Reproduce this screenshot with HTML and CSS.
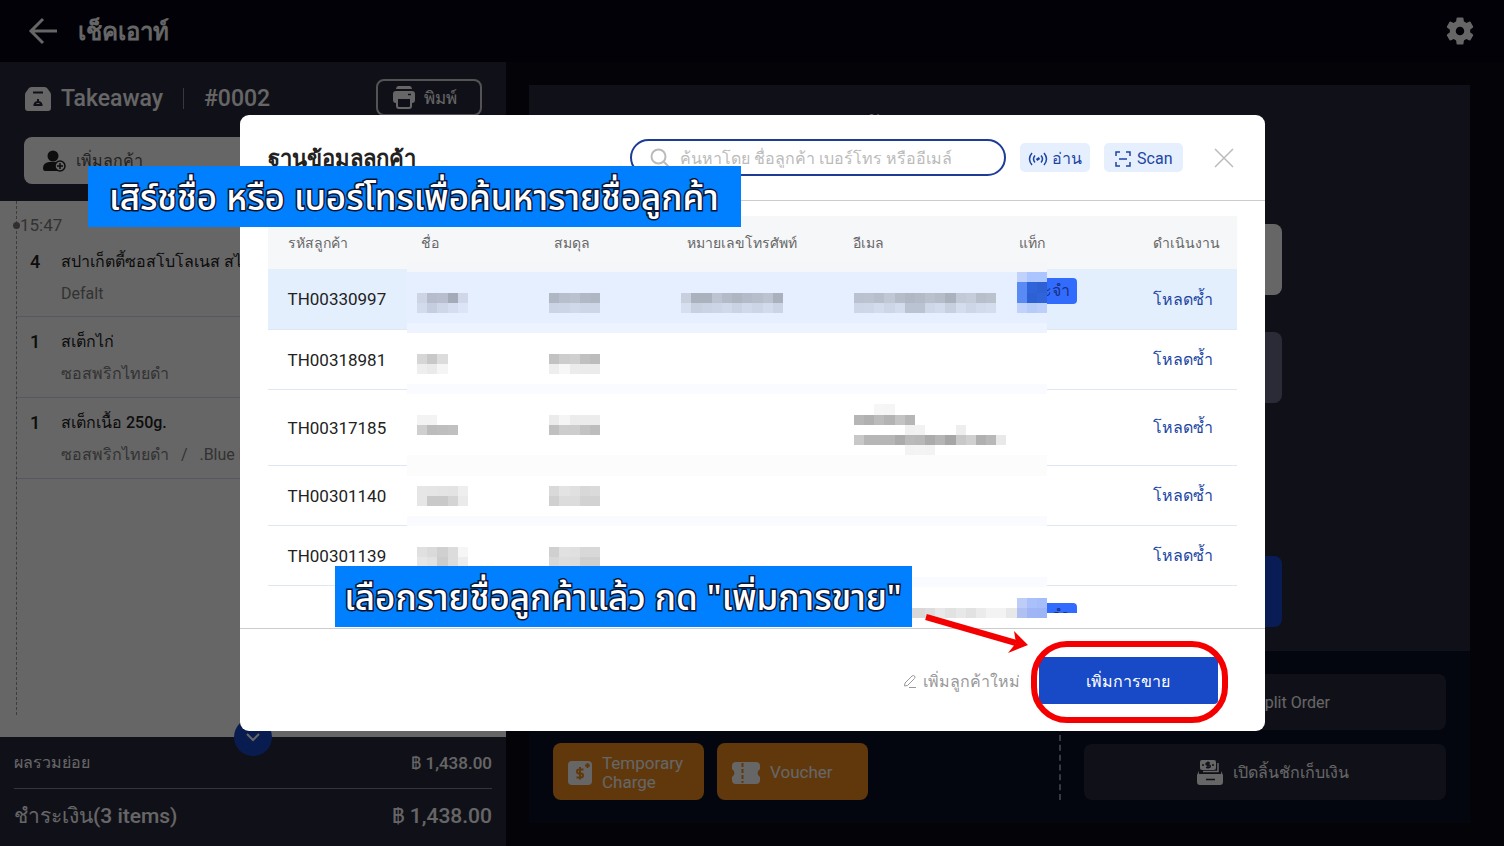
FILE: index.html
```html
<!DOCTYPE html>
<html lang="th">
<head>
    <meta charset="UTF-8">
    <meta name="viewport" content="width=device-width, initial-scale=1.0">
    <title>เช็คเอาท์</title>
    <link rel="stylesheet" href="styles.css">
</head>
<body>
    <div class="app">
        <header class="topbar">
            <button class="icon-btn" aria-label="Back">
                <svg width="30" height="28" viewBox="0 0 30 28" fill="none" stroke="currentColor" stroke-width="3"><path d="M16 2 4 14l12 12M4 14h26"/></svg>
            </button>
            <h1>เช็คเอาท์</h1>
            <button class="icon-btn settings" aria-label="Settings">
                <svg width="34" height="34" viewBox="0 0 24 24" fill="currentColor"><path d="M19.14 12.94c.04-.3.06-.61.06-.94s-.02-.64-.07-.94l2.03-1.58a.49.49 0 0 0 .12-.61l-1.92-3.32a.49.49 0 0 0-.59-.22l-2.39.96a7 7 0 0 0-1.62-.94l-.36-2.54a.48.48 0 0 0-.48-.41h-3.84a.48.48 0 0 0-.47.41l-.36 2.54c-.59.24-1.13.57-1.62.94l-2.39-.96a.48.48 0 0 0-.59.22L2.74 8.87a.48.48 0 0 0 .12.61l2.03 1.58a6 6 0 0 0 0 1.88l-2.03 1.58a.49.49 0 0 0-.12.61l1.92 3.32c.12.22.37.29.59.22l2.39-.96c.5.38 1.03.7 1.62.94l.36 2.54c.05.24.24.41.48.41h3.84c.24 0 .44-.17.47-.41l.36-2.54a7 7 0 0 0 1.62-.94l2.39.96c.22.08.47 0 .59-.22l1.92-3.32a.48.48 0 0 0-.12-.61zM12 15a3 3 0 1 1 0-6 3 3 0 0 1 0 6z"/></svg>
            </button>
        </header>

        <div class="workspace">
            <section class="order">
                <div class="order-head">
                    <div class="order-title">
                        <svg width="28" height="26" viewBox="0 0 28 26"><path fill="#fff" d="M8 1h12q2 0 3 1l3 4q1 1 1 3v13q0 3-3 3H4q-3 0-3-3V9q0-2 1-3l3-4q1-1 3-1z"/><path stroke="#28283c" stroke-width="2" fill="none" d="M9 6.500h10M9.500 19h9M10.500 18.500a3.700 3.700 0 0 1 7 0M14 13v2"/></svg>
                        <span>Takeaway</span>
                        <i class="bar"></i>
                        <span>#0002</span>
                    </div>
                    <button class="print-btn">
                        <svg width="22" height="23" viewBox="0 0 22 23"><path fill="#fff" d="M5.500 0h11Q18.500 0 19 3H3q.5-3 2.500-3zM3 5h16q3 0 3 3v6q0 3-3 3v-5H3v5q-3 0-3-3V8q0-3 3-3z"/><path fill="none" stroke="#fff" stroke-width="2" d="M4 12h14v8q0 2-2 2H6q-2 0-2-2z"/><path stroke="#28283c" stroke-width="1.500" d="M15 8.500h3"/></svg>
                        พิมพ์
                    </button>
                </div>
                <button class="customer-btn">
                    <svg width="24" height="22" viewBox="0 0 24 22"><circle cx="11" cy="6" r="5.500" fill="#222"/><path fill="#222" d="M7 12h8q6 1 6 9H3q-2 0-2-3 0-5 6-6z"/><circle cx="18" cy="16" r="5" fill="#fff" stroke="#222" stroke-width="1.500"/><path stroke="#222" stroke-width="1.500" d="M15 16h6M18 13v6"/></svg>
                    เพิ่มลูกค้า
                </button>
                <div class="sheet">
                    <div class="timeline">
                        <time>15:47</time>
                        <ul class="items">
                            <li><b>4</b><div><p>สปาเก็ตตี้ซอสโบโลเนส สไตล์</p><small>Defalt</small></div></li>
                            <li><b>1</b><div><p>สเต็กไก่</p><small>ซอสพริกไทยดำ</small></div></li>
                            <li><b>1</b><div><p>สเต็กเนื้อ <strong>250g.</strong></p><small>ซอสพริกไทยดำ &nbsp; / &nbsp; .Blue R</small></div></li>
                        </ul>
                    </div>
                </div>
                <div class="totals">
                    <button class="expand-btn" aria-label="Expand">
                        <svg width="14" height="10" viewBox="0 0 14 10" fill="none" stroke="#fff" stroke-width="2"><path d="m1 2 6 6 6-6"/></svg>
                    </button>
                    <div class="subtotal"><span>ผลรวมย่อย</span><b>฿ 1,438.00</b></div>
                    <div class="total"><span>ชำระเงิน(3 items)</span><span>฿ 1,438.00</span></div>
                </div>
            </section>

            <section class="payment">
                <div class="pay-form">
                    <h2>ต้องชำระเงินจำนวนรวม</h2>
                    <div class="field amount"></div>
                    <div class="field method"></div>
                    <div class="field confirm"></div>
                </div>
                <div class="actions">
                    <div class="promo">
                        <button class="orange">
                            <svg width="24" height="24" viewBox="0 0 24 24"><rect width="24" height="24" rx="4" fill="#fff"/><path fill="none" stroke="#f08c20" stroke-width="2" d="M15.500 8.500H11a2 2 0 0 0 0 4h2a2 2 0 0 1 0 4H8.500M12 6v12.500M19.500 2v5M17 4.500h5"/></svg>
                            Temporary Charge
                        </button>
                        <button class="orange">
                            <svg width="28" height="22" viewBox="0 0 28 22"><path fill="#fff" d="M4 0h20q4 0 4 4v3q-5 4 0 8v3q0 4-4 4H4q-4 0-4-4v-3q5-4 0-8V4q0-4 4-4z"/><path stroke="#f08c20" stroke-width="2" stroke-dasharray="4 2" d="M10.500 1v20"/></svg>
                            Voucher
                        </button>
                    </div>
                    <div class="tools">
                        <button>
                            <svg width="32" height="24" viewBox="0 0 32 24"><path fill="#fff" d="M4 1h24v22H4z"/></svg>
                            Split Order
                        </button>
                        <button>
                            <svg width="28" height="26" viewBox="0 0 28 26"><rect x="4" y="1" width="16" height="10" rx="2" fill="#fff"/><path fill="none" stroke="#fff" stroke-width="1.500" d="M22 4v8.500H7"/><path fill="#fff" d="M3 12v3h22v-3l2 4v7q0 3-3 3H4q-3 0-3-3v-7z"/><path fill="none" stroke="#28283c" stroke-width="1.500" d="M14 4h-3a1 1 0 0 0 0 2h2a1 1 0 0 1 0 2.500h-3M12 2.500v7M6 6h2M16 6h2M10 20.500h9"/></svg>
                            เปิดลิ้นชักเก็บเงิน
                        </button>
                    </div>
                </div>
            </section>
        </div>
    </div>

    <div class="backdrop">
        <div class="dialog" role="dialog" aria-labelledby="dialog-title">
            <div class="dialog-head">
                <h2 id="dialog-title">ฐานข้อมูลลูกค้า</h2>
                <div class="search">
                    <svg width="20" height="20" viewBox="0 0 20 20" fill="none" stroke="#bbb" stroke-width="2"><circle cx="8.500" cy="8.500" r="7"/><path d="m13.500 13.500 5 5"/></svg>
                    <input type="search" aria-label="ค้นหาลูกค้า" placeholder="ค้นหาโดย ชื่อลูกค้า เบอร์โทร หรืออีเมล์">
                </div>
                <button class="soft-btn read-btn">
                    <svg width="20" height="14" viewBox="0 0 20 14" fill="none" stroke="currentColor" stroke-width="1.500"><path d="M4 1q-5 6 0 12M16 1q5 6 0 12M7 3.500q-3 3.500 0 7M13 3.500q3 3.500 0 7"/><path stroke-width="2.500" d="m8.500 8 3-2"/></svg>
                    อ่าน
                </button>
                <button class="soft-btn">
                    <svg width="18" height="18" viewBox="0 0 18 18" fill="none" stroke="currentColor" stroke-width="1.500"><path d="M6 2H2v4M12 2h4v4M6 16H2v-4M12 16h4v-4M5 9h8"/></svg>
                    Scan
                </button>
                <button class="close-btn" aria-label="Close">
                    <svg width="20" height="20" viewBox="0 0 20 20" stroke="#bbb" stroke-width="1.500"><path d="m1 1 18 18M19 1 1 19"/></svg>
                </button>
            </div>

            <div class="dialog-body">
                <div class="table-wrap">
                    <table>
                        <thead>
                            <tr><th>รหัสลูกค้า</th><th>ชื่อ</th><th>สมดุล</th><th class="wide">หมายเลขโทรศัพท์</th><th class="wide">อีเมล</th><th>แท็ก</th><th class="last">ดำเนินงาน</th></tr>
                        </thead>
                        <tbody>
                            <tr class="selected"><td>TH00330997</td><td></td><td></td><td></td><td></td><td><span class="tag">ประจำ</span></td><td><a href="#">โหลดซ้ำ</a></td></tr>
                            <tr><td>TH00318981</td><td></td><td></td><td></td><td></td><td></td><td><a href="#">โหลดซ้ำ</a></td></tr>
                            <tr class="tall"><td>TH00317185</td><td></td><td></td><td></td><td></td><td></td><td><a href="#">โหลดซ้ำ</a></td></tr>
                            <tr><td>TH00301140</td><td></td><td></td><td></td><td></td><td></td><td><a href="#">โหลดซ้ำ</a></td></tr>
                            <tr><td>TH00301139</td><td></td><td></td><td></td><td></td><td></td><td><a href="#">โหลดซ้ำ</a></td></tr>
                            <tr class="tall"><td></td><td></td><td></td><td></td><td></td><td><span class="tag">ประจำ</span></td><td></td></tr>
                        </tbody>
                    </table>
                </div>
                <svg class="mosaic" id="mosaic" viewBox="0 0 63 35" preserveAspectRatio="none" shape-rendering="crispEdges"></svg>
            </div>

            <div class="dialog-foot">
                <button class="new-btn">
                    <svg width="14" height="14" viewBox="0 0 14 14" fill="none" stroke="currentColor"><path d="m2 9 7-7q1.500-1 2.500 0t0 2.500l-7 7-3 .5zM6 13.500h7"/></svg>
                    เพิ่มลูกค้าใหม่
                </button>
                <button class="primary-btn">เพิ่มการขาย</button>
            </div>

            <div class="callout callout-search">เสิร์ชชื่อ หรือ เบอร์โทรเพื่อค้นหารายชื่อลูกค้า</div>
            <div class="callout callout-pick">เลือกรายชื่อลูกค้าแล้ว กด "เพิ่มการขาย"</div>
            <svg class="arrow" width="106" height="44" viewBox="0 0 106 44"><path stroke="#f40000" stroke-width="6" d="M2 5 92 31"/><path fill="#f40000" d="m90 19 14 14-20 8 8-10z"/></svg>
            <div class="ring"></div>
        </div>
    </div>
    <script src="mosaic.js"></script>
</body>
</html>
```

FILE: styles.css
```css
* {
    box-sizing: border-box;
}
body {
    margin: 0;
    background: #0c0c16;
    color: white;
    font-family: Roboto, sans-serif;
    font-size: 16px;
}
h1, h2, p, ul {
    margin: 0;
    padding: 0;
}
button {
    display: flex;
    align-items: center;
    justify-content: center;
    border: none;
    padding: 0;
    background: none;
    color: inherit;
    font: inherit;
    cursor: pointer;
}
svg {
    flex: none;
}
.app {
    display: flex;
    flex-direction: column;
    height: 100vh;
}
.topbar {
    display: flex;
    align-items: center;
    height: 62px;
    padding: 0 27px;
    background: #030312;
}
.topbar h1 {
    margin-left: 21px;
    padding-top: 2px;
    font-size: 24px;
    line-height: 32px;
}
.icon-btn.settings {
    margin-left: auto;
}
.workspace {
    flex: 1;
    display: flex;
    min-height: 0;
}

/* order panel */
.order {
    display: flex;
    flex-direction: column;
    flex: 0 0 506px;
    background: #28283c;
}
.order-head {
    display: flex;
    align-items: center;
    justify-content: space-between;
    height: 75px;
    padding: 0 24px 4px;
}
.order-title {
    display: flex;
    align-items: center;
    padding-top: 2px;
    font-size: 23px;
    font-weight: 500;
}
.order-title svg {
    margin-right: 9px;
}
.bar {
    width: 1px;
    height: 21px;
    margin: 0 20px;
    background: #8c8ca0;
}
.print-btn {
    gap: 9px;
    width: 106px;
    height: 37px;
    padding-right: 8px;
    border: 2px solid #d0d0d8;
    border-radius: 8px;
    font-size: 17px;
}
.customer-btn {
    justify-content: flex-start;
    gap: 10px;
    height: 47px;
    margin: 0 24px 17px;
    padding: 0 18px;
    border-radius: 8px;
    background: white;
    color: #555;
}
.sheet {
    flex: 1;
    min-height: 0;
    padding-bottom: 22px;
    background: white;
    color: #222;
}
.timeline {
    height: 100%;
    margin-left: 16px;
    border-left: 1px dashed #999;
}
.timeline time {
    display: flex;
    align-items: center;
    height: 36px;
    padding-top: 12px;
    color: #808080;
    font-size: 17px;
}
.timeline time::before {
    content: "";
    width: 7px;
    height: 7px;
    margin: 0 0 0 -4px;
    border-radius: 50%;
    background: #777;
}
.items {
    list-style: none;
}
.items li {
    display: flex;
    height: 80px;
    padding: 13px;
    border-bottom: 1px solid #d5deea;
    line-height: 24px;
}
.items li:nth-child(n+2) {
    height: 81px;
}
.items b {
    width: 31px;
    font-size: 18px;
    font-weight: 500;
}
.items small {
    display: block;
    margin-top: 8px;
    color: #808080;
    font-size: 16px;
}
.items strong {
    font-weight: 500;
}
.totals {
    position: relative;
    height: 109px;
    padding: 0 14px;
}
.subtotal, .total {
    display: flex;
    align-items: center;
    justify-content: space-between;
    height: 52px;
}
.subtotal {
    border-bottom: 1px solid #82829a;
}
.subtotal b {
    font-size: 17px;
    font-weight: 500;
}
.total {
    font-size: 21px;
    font-weight: 500;
}
.expand-btn {
    position: absolute;
    top: -19px;
    left: 50%;
    width: 38px;
    height: 38px;
    margin-left: -19px;
    border-radius: 50%;
    background: #1847c8;
}

/* payment panel */
.payment {
    flex: 1;
    display: flex;
    flex-direction: column;
    margin: 23px 34px 23px 23px;
    background: #28283c;
}
.pay-form {
    flex: 1;
    display: flex;
    flex-direction: column;
    align-items: center;
    gap: 37px;
    padding-top: 22px;
}
.pay-form h2 {
    height: 80px;
    font-size: 26px;
    line-height: 40px;
    font-weight: 500;
}
.field {
    width: 60%;
    height: 71px;
    border-radius: 8px;
}
.amount {
    background: white;
}
.method {
    background: #696b87;
}
.confirm {
    margin: auto 0 24px;
    background: #1b48d4;
}
.actions {
    display: flex;
    align-items: flex-end;
    padding: 23px 24px;
    background: #0a1026;
}
.promo {
    flex: 1;
    display: flex;
    gap: 13px;
    height: 124px;
    align-items: flex-end;
    border-right: 2px dashed #8c8ca0;
}
.orange {
    justify-content: flex-start;
    gap: 10px;
    width: 151px;
    height: 57px;
    padding: 2px 14px 0 15px;
    border-radius: 8px;
    background: #f08c20;
    font-size: 17px;
    line-height: 19px;
    text-align: left;
}
.tools {
    display: grid;
    gap: 14px;
    width: 362px;
    margin-left: 23px;
}
.tools button {
    gap: 9px;
    height: 56px;
    padding-left: 14px;
    border-radius: 8px;
    background: #28283c;
}

/* customer dialog */
.backdrop {
    position: fixed;
    inset: 0;
    display: flex;
    align-items: center;
    justify-content: center;
    background: rgba(0, 0, 0, 0.6);
}
.dialog {
    position: relative;
    width: 1025px;
    max-width: 100%;
    border-radius: 9px;
    background: white;
    color: #222;
}
.dialog-head {
    display: flex;
    align-items: center;
    height: 86px;
    padding: 0 31px 0 28px;
    border-bottom: 1px solid #ccc;
}
.dialog-head h2 {
    padding-top: 2px;
    font-size: 22px;
    line-height: 32px;
}
.search {
    display: flex;
    align-items: center;
    gap: 10px;
    width: 376px;
    height: 37px;
    margin-left: auto;
    padding: 0 18px;
    border: 2px solid #1c3c96;
    border-radius: 19px;
}
.search input {
    flex: 1;
    min-width: 0;
    padding: 2px 0 0;
    border: none;
    outline: none;
    background: none;
    font: inherit;
}
.search input::placeholder {
    color: #bbb;
}
.soft-btn {
    gap: 5px;
    height: 29px;
    margin-left: 14px;
    padding: 2px 10px 0;
    border-radius: 5px;
    background: #e6effd;
    color: #1c46a4;
}
.read-btn {
    gap: 4px;
    padding: 2px 8px 0;
}
.close-btn {
    margin-left: 31px;
}
.dialog-body {
    position: relative;
    padding: 15px 28px;
    border-bottom: 1px solid #ccc;
}
.table-wrap {
    height: 397px;
    overflow: hidden;
}
table {
    width: 100%;
    border-collapse: separate;
    border-spacing: 0;
    table-layout: fixed;
}
th {
    height: 53px;
    padding: 0 0 0 20px;
    background: #f6f7f9;
    color: #666;
    font-size: 14px;
    font-weight: 400;
    text-align: left;
}
th.wide {
    width: 166px;
}
th.last {
    width: 104px;
}
td {
    height: 60px;
    padding: 0 0 0 20px;
    border-bottom: 1px solid #dfe7f2;
    font-size: 17px;
}
.tall td {
    height: 76px;
}
.selected td {
    height: 61px;
    background: #e4effe;
}
td a {
    color: #1c46a4;
    font-size: 16px;
    text-decoration: none;
}
.tag {
    display: block;
    width: 58px;
    height: 26px;
    margin-bottom: 16px;
    padding-right: 7px;
    border-radius: 4px;
    background: #316cff;
    color: #1a2f80;
    font-size: 16px;
    line-height: 26px;
    text-align: right;
}
.mosaic {
    position: absolute;
    top: 61px;
    left: 167px;
    width: 640px;
    height: 356px;
}
.dialog-foot {
    display: flex;
    align-items: center;
    justify-content: flex-end;
    gap: 19px;
    height: 102px;
    padding: 0 47px 0 28px;
}
.new-btn {
    gap: 6px;
    padding-top: 2px;
    color: #999;
}
.primary-btn {
    width: 179px;
    height: 47px;
    padding-top: 2px;
    border-radius: 4px;
    background: #1849c6;
    color: white;
}

/* tutorial notes over the dialog */
.callout {
    position: absolute;
    display: flex;
    align-items: center;
    justify-content: center;
    height: 61px;
    padding-top: 5px;
    background: #007fff;
    color: white;
    font-family: "Noto Sans Thai", "Noto Sans", sans-serif;
    font-size: 35px;
    font-weight: 500;
    white-space: nowrap;
    -webkit-text-stroke: 3px #0a1430;
    paint-order: stroke fill;
}
.callout-search {
    top: 51px;
    left: -152px;
    width: 653px;
}
.callout-pick {
    top: 451px;
    left: 95px;
    width: 577px;
}
.arrow {
    position: absolute;
    top: 497px;
    left: 684px;
}
.ring {
    position: absolute;
    right: 37px;
    bottom: 8px;
    width: 197px;
    height: 82px;
    border: 6px solid #f40000;
    border-radius: 36px;
    pointer-events: none;
}
```

FILE: mosaic.js
```js
// Blurred customer data: [column, row, colours...], two digits mean a grey
const bands = [
    [0, 1, "#f4f6f9"],
    [1, 5, "#e6efff"],
    [6, 1, "#edf3ff"],
    [7, 28, "#ffffff"],
    [12, 1, "#fafbfe"],
    [19, 2, "#fcfcfd"],
    [25, 1, "#fafbfe"],
    [31, 1, "#fafbfe"]
];
const runs = [
    // TH00330997
    [1, 3, "cdd5e5 b6bccb b8becd a3aab8 cfd7e8"],
    [1, 4, "d1dbec c4cee0 cdd7e8 d5def0 dbe5f7"],
    [14, 3, "afb7c4 b7bfcc bac2cf b1b9c6 afb7c5"],
    [14, 4, "cad4e5 cbd5e6 cfd9ea ccd6e7 ccd6e7"],
    [27, 3, "c8d0dd aab2be aab2be bcc4d1 b3bbc8 aeb6c2 b3bbc8 b6becb bbc3d0 a9b1bd"],
    [27, 4, "d5dff0 c6d0df c9d3e3 cbd5e5 cfd9ea c9d3e3 cfd9ea cbd5e5 d1dbec cad4e4"],
    [44, 3, "b9c2ce bac3cf b6bfcb c0c8d5 b5bdc9 b0b8c4 b3bbc7 b9c1cd b5bdc9 aab2be c2cad7 c5cddb b7bfcb bac2ce"],
    [44, 4, "ccd6e6 cdd7e7 d2dcec ccd6e6 d2dcec bac3d2 bac3d2 cdd7e7 d1dbeb c6d0df d3ddee ccd6e6 d1dbeb d3ddee"],
    [60, 1, "c0d1fb aac5ff aac5ff"],
    [60, 2, "5a8bf5 2f63d9 2d60d2"],
    [60, 3, "5a8bf5 2d60d2 2f63d9"],
    [60, 4, "c0d1fb b5cbf8 bbcffa"],
    // TH00318981
    [1, 9, "d6 c8 dc"],
    [1, 10, "ee ea f5"],
    [14, 9, "c2 cd d0 c0 bc"],
    [14, 10, "ee f7 ec eb eb"],
    // TH00317185
    [1, 15, "f3 f3"],
    [1, 16, "cf bc be c0"],
    [14, 15, "eb f5 ec ec ec"],
    [14, 16, "c0 cd cd c3 bd"],
    [46, 14, "f6 f5"],
    [44, 15, "b6 b0 bb b3 c3 b6"],
    [49, 16, "f1 f2"],
    [54, 16, "ee"],
    [44, 17, "c8 b6 b6 b6 ab ba b8 ab b5 a6 c8 d0 b0 b8 e9"],
    [49, 18, "f3 f4 f3"],
    // TH00301140
    [1, 22, "e6 e5 e4 e3 ee"],
    [1, 23, "e6 c9 c9 d4 ea"],
    [14, 22, "d9 e3 e0 d8 da"],
    [14, 23, "d0 dc dc d2 d2"],
    // TH00301139
    [1, 28, "e0 da d0 dc f6"],
    [1, 29, "e6 e2 cc dc ed"],
    [14, 28, "d0 e1 e0 d8 d8"],
    [14, 29, "d8 dd dc cf cf"],
    // last row, half scrolled
    [60, 33, "bdcdf8 aac0fa a5bdfb"],
    [49, 34, "d8 d8 dd e8 e2 e8 e2 eb f3 f3 e8 b0c0f0 a0b5f5 9db5f5"]
];

function rect(x, y, w, h, fill) {
    return `<rect x="${x}" y="${y}" width="${w}" height="${h}" fill="${fill}"/>`;
}

let blocks = "";
bands.forEach(([y, h, fill]) => {
    blocks += rect(0, y, 63, h, fill);
});
runs.forEach(([x, y, colours]) => {
    colours.split(" ").forEach((c, i) => {
        blocks += rect(x + i, y, 1, 1, "#" + (c.length == 2 ? c + c + c : c));
    });
});
document.getElementById("mosaic").innerHTML = blocks;
```
